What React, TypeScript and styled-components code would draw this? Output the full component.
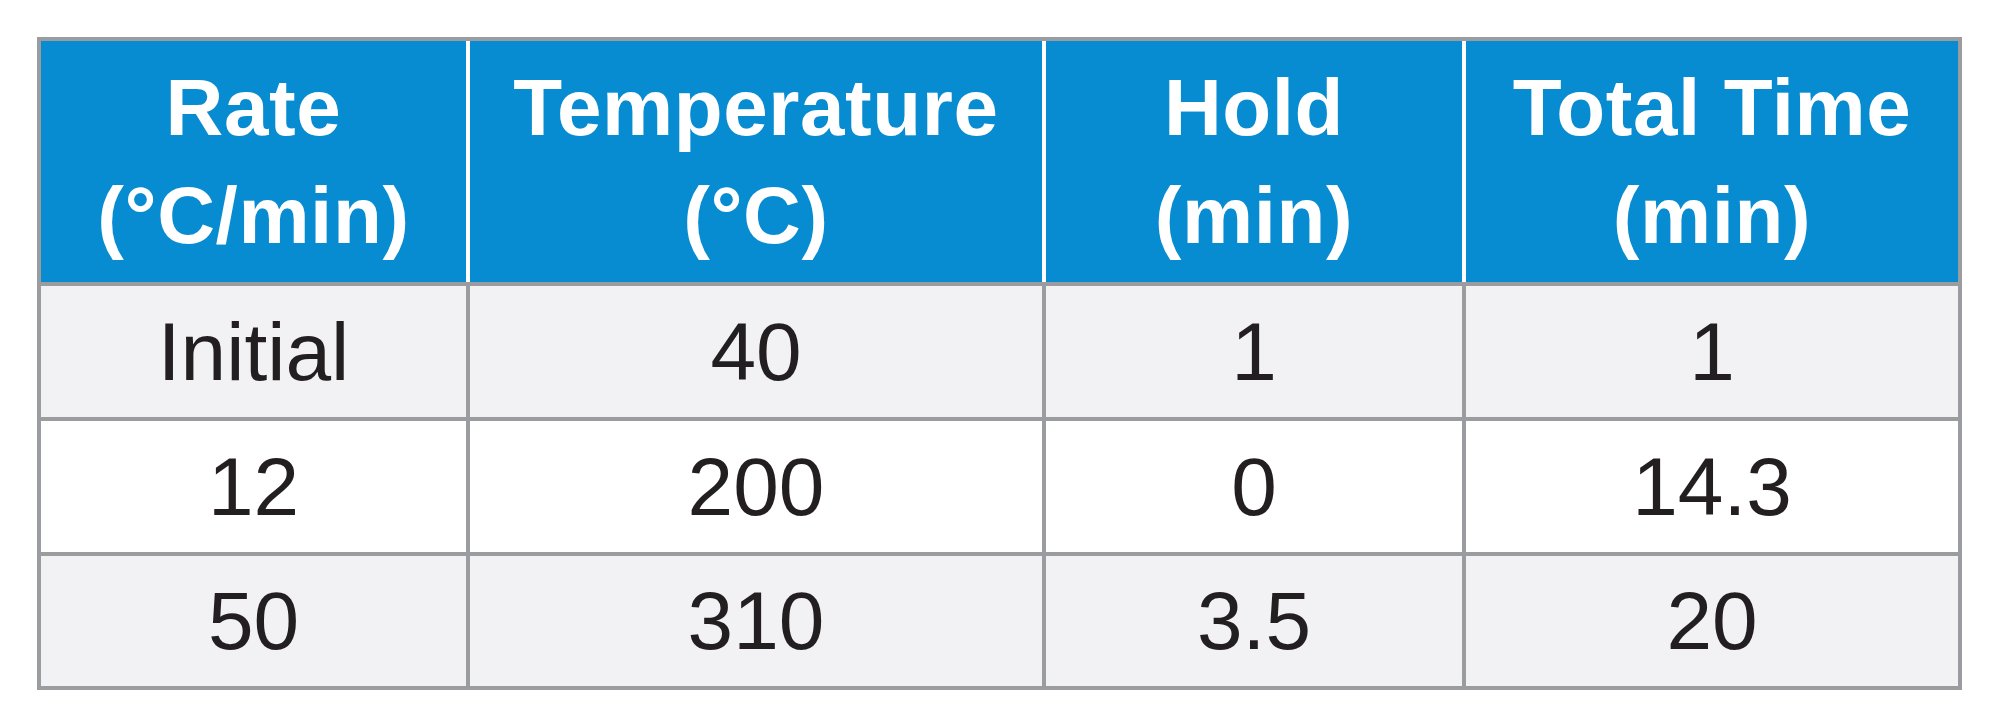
import React from "react";
import styled, { createGlobalStyle } from "styled-components";

const GlobalStyle = createGlobalStyle`
  html, body {
    margin: 0;
    padding: 0;
    background: #ffffff;
  }
  body {
    font-family: "Liberation Sans", Arial, Helvetica, sans-serif;
  }
`;

const COLS = "425px 572px 416px 492px";
const LINE = "#9b9c9f";

const Page = styled.div`
  padding: 37px 0 0 37px;
`;

const Table = styled.div`
  display: flex;
  flex-direction: column;
  gap: 4px;
  width: fit-content;
  border: 4px solid ${LINE};
  background: ${LINE};
`;

const HeaderRow = styled.div`
  display: grid;
  grid-template-columns: ${COLS};
  column-gap: 4px;
  height: 241px;
  background: #ffffff;
`;

const HeaderCell = styled.div`
  display: flex;
  align-items: center;
  justify-content: center;
  background: #078bd1;
  color: #ffffff;
  font-family: "Liberation Sans", Arial, Helvetica, sans-serif;
  font-weight: 700;
  font-size: 80px;
  line-height: 108px;
  letter-spacing: 0.6px;
  text-align: center;
`;

const BodyRow = styled.div<{ $height: number }>`
  display: grid;
  grid-template-columns: ${COLS};
  column-gap: 4px;
  height: ${(p) => p.$height}px;
  background: ${LINE};
`;

const BodyCell = styled.div<{ $shaded: boolean }>`
  display: flex;
  align-items: center;
  justify-content: center;
  background: ${(p) => (p.$shaded ? "#f2f2f4" : "#ffffff")};
  color: #231f20;
  font-family: "Liberation Sans", Arial, Helvetica, sans-serif;
  font-weight: 400;
  font-size: 82px;
  line-height: 1;
`;

const headers: [string, string][] = [
  ["Rate", "(°C/min)"],
  ["Temperature", "(°C)"],
  ["Hold", "(min)"],
  ["Total Time", "(min)"],
];

const rows: { cells: string[]; height: number; shaded: boolean }[] = [
  { cells: ["Initial", "40", "1", "1"], height: 131, shaded: true },
  { cells: ["12", "200", "0", "14.3"], height: 131, shaded: false },
  { cells: ["50", "310", "3.5", "20"], height: 130, shaded: true },
];

export default function App() {
  return (
    <>
      <GlobalStyle />
      <Page>
        <Table>
          <HeaderRow>
            {headers.map(([a, b]) => (
              <HeaderCell key={a}>
                <div>
                  {a}
                  <br />
                  {b}
                </div>
              </HeaderCell>
            ))}
          </HeaderRow>
          {rows.map((r, i) => (
            <BodyRow key={i} $height={r.height}>
              {r.cells.map((c, j) => (
                <BodyCell key={j} $shaded={r.shaded}>
                  {c}
                </BodyCell>
              ))}
            </BodyRow>
          ))}
        </Table>
      </Page>
    </>
  );
}
